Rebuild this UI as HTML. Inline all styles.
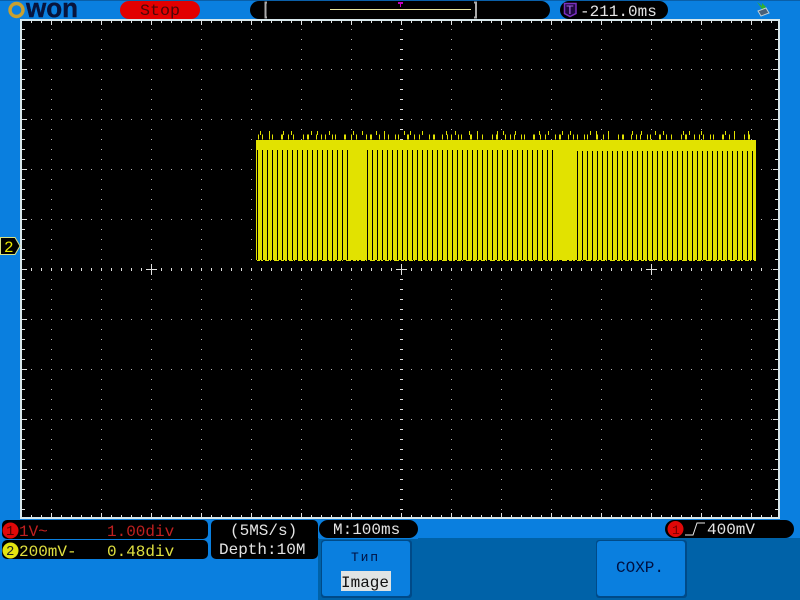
<!DOCTYPE html>
<html>
<head>
<meta charset="utf-8">
<style>
html,body{margin:0;padding:0;width:800px;height:600px;overflow:hidden;background:#0a7fdf}
svg{display:block}
text{font-family:"Liberation Mono",monospace;font-size:16px;white-space:pre}
</style>
</head>
<body>
<svg width="800" height="600" viewBox="0 0 800 600" xmlns="http://www.w3.org/2000/svg">
<defs>
<pattern id="dv" patternUnits="userSpaceOnUse" x="1" y="9" width="50" height="10"><rect width="1" height="1" fill="#b0b0b0"/></pattern>
<pattern id="dh" patternUnits="userSpaceOnUse" x="1" y="19" width="10" height="50"><rect width="1" height="1" fill="#b0b0b0"/></pattern>
<pattern id="b1" patternUnits="userSpaceOnUse" x="257" y="0" width="5" height="10"><rect width="1" height="10" fill="#000"/></pattern>
<pattern id="b2" patternUnits="userSpaceOnUse" x="367" y="0" width="5" height="10"><rect width="1" height="10" fill="#000"/></pattern>
<pattern id="b3" patternUnits="userSpaceOnUse" x="577" y="0" width="5" height="10"><rect width="1" height="10" fill="#000"/></pattern>
</defs>
<rect width="800" height="600" fill="#0a7fdf"/>
<rect width="800" height="1" fill="#0a5fa8"/>

<!-- scope screen -->
<rect x="20" y="19" width="760" height="500" fill="#d8e8ec"/>
<rect x="22" y="21" width="756" height="496" fill="#000"/>
<rect x="22" y="21" width="756" height="496" fill="url(#dv)"/>
<rect x="22" y="21" width="756" height="496" fill="url(#dh)"/>
<g stroke="#e0e0e0" fill="none">
<line x1="31" y1="22" x2="778" y2="22" stroke-width="2" stroke-dasharray="1 9"/>
<line x1="51" y1="23" x2="778" y2="23" stroke-width="4" stroke-dasharray="1 49"/>
<line x1="31" y1="516" x2="778" y2="516" stroke-width="2" stroke-dasharray="1 9"/>
<line x1="51" y1="515" x2="778" y2="515" stroke-width="4" stroke-dasharray="1 49"/>
<line x1="23.5" y1="29" x2="23.5" y2="517" stroke-width="3" stroke-dasharray="1 9"/>
<line x1="24.5" y1="69" x2="24.5" y2="517" stroke-width="5" stroke-dasharray="1 49"/>
<line x1="776.5" y1="29" x2="776.5" y2="517" stroke-width="3" stroke-dasharray="1 9"/>
<line x1="775.5" y1="69" x2="775.5" y2="517" stroke-width="5" stroke-dasharray="1 49"/>
<line x1="31" y1="269.5" x2="770" y2="269.5" stroke-width="3" stroke-dasharray="1 9"/>
<line x1="401.5" y1="29" x2="401.5" y2="510" stroke-width="3" stroke-dasharray="1 9"/>
<path d="M146 269.5H157M151.5 264V275M646 269.5H657M651.5 264V275M396 269.5H407M401.5 264V275" stroke-width="1"/>
</g>

<!-- waveform -->
<g stroke="#e2e200" fill="none">
<line x1="258" y1="137" x2="756" y2="137" stroke-width="5" stroke-dasharray="1 3 1 6 1 2 1 8 2 5 1 4 1 9 1 3 2 7 1 4"/>
<line x1="260" y1="133" x2="756" y2="133" stroke-width="4" stroke-dasharray="1 8 1 13 1 7 1 19 1 5 1 11 1 23"/>
<line x1="257" y1="260.5" x2="756" y2="260.5" stroke-width="1" stroke-dasharray="3 1 2 2 4 1 1 3 5 2"/>
</g>
<rect x="256" y="140" width="500" height="120" fill="#e2e200"/>
<rect x="257" y="150" width="95" height="110" fill="url(#b1)"/>
<rect x="367" y="150" width="190" height="110" fill="url(#b2)"/>
<rect x="577" y="151" width="178" height="109" fill="url(#b3)"/>

<!-- ch2 marker -->
<path d="M0.5 237.5H15L20 246L15 254.5H0.5Z" fill="#000" stroke="#d8e080"/>
<text x="4" y="252" fill="#e8e800">2</text>

<!-- logo -->
<circle cx="16.500" cy="10" r="6.500" fill="none" stroke="#c8a030" stroke-width="3.400"/>
<text x="26" y="17" textLength="52" lengthAdjust="spacingAndGlyphs" style="font-family:'Liberation Sans',sans-serif;font-size:27px;font-weight:bold" fill="#08143c" stroke="#08143c" stroke-width=".4">won</text>

<!-- stop -->
<rect x="120" y="1" width="80" height="18" rx="9" fill="#e20000"/>
<text x="140" y="15" fill="#4a0808" textLength="40" lengthAdjust="spacingAndGlyphs">Stop</text>

<!-- timebase bar -->
<rect x="250" y="1" width="300" height="18" rx="9" fill="#000"/>
<path d="M267 2.500H265.500V17.500H267" fill="none" stroke="#aaa" stroke-width="2"/>
<path d="M474 2.500H476V17.500H474" fill="none" stroke="#aaa" stroke-width="2"/>
<rect x="330" y="9" width="141" height="1" fill="#e8e8a0"/>
<path d="M398 2H403V4H401V7H400V4H398Z" fill="#c000c0"/>

<!-- trigger position -->
<rect x="560" y="1" width="108" height="18" rx="9" fill="#000"/>
<path d="M564.500 3.500H576V13.500L570 16.500L564.500 13.500Z" fill="#200840" stroke="#7a30c0" stroke-width="1.500"/>
<text x="566" y="14" fill="#a060e0" style="font-size:13px">T</text>
<text x="580" y="16" fill="#e4e4e4">-211.0ms</text>

<!-- usb icon -->
<path d="M757 2L762 6V3L766 7L762 11V9Z" fill="#30b030"/>
<path d="M758 11L766 8L769 13L761 16Z" fill="#4a6078" stroke="#c0d0d8" stroke-width="1"/>

<!-- channel info -->
<rect x="2" y="520" width="206" height="19" rx="5" fill="#000"/>
<rect x="2" y="540" width="206" height="19" rx="5" fill="#000"/>
<circle cx="10.500" cy="530.500" r="8" fill="#e00808"/>
<circle cx="10.500" cy="550.500" r="8" fill="#e4e410"/>
<text x="6" y="535" fill="#500" style="font-size:14px">1</text>
<text x="6" y="555" fill="#222" style="font-size:14px">2</text>
<text x="19" y="536" fill="#c02020">1V~</text>
<text x="107" y="536" fill="#c02020">1.00div</text>
<text x="19" y="556" fill="#e0e040">200mV-</text>
<text x="107" y="556" fill="#e0e040">0.48div</text>

<rect x="211" y="520" width="107" height="39" rx="5" fill="#000"/>
<text x="230" y="535" fill="#e4e4e4">(5MS/s)</text>
<text x="219" y="554" fill="#e4e4e4">Depth:10M</text>

<rect x="319" y="520" width="99" height="18" rx="9" fill="#000"/>
<text x="333" y="534" fill="#e4e4e4">M:100ms</text>

<rect x="665" y="520" width="129" height="18" rx="9" fill="#000"/>
<circle cx="675.500" cy="529" r="8" fill="#e00808"/>
<text x="672" y="534" fill="#700" style="font-size:13px">1</text>
<path d="M685 535H693L697 523H705" fill="none" stroke="#e8e8e8" stroke-width="1"/>
<text x="707" y="534" fill="#e4e4e4">400mV</text>

<!-- menu panel -->
<rect x="318" y="538" width="482" height="62" fill="#0062a8"/>
<rect x="319" y="538" width="99" height="1" fill="#0a7fdf"/>

<rect x="321" y="540" width="91" height="58" rx="3" fill="#004a88"/>
<rect x="322" y="541" width="88" height="55" rx="3" fill="#0a7fdf"/>
<rect x="341" y="571" width="50" height="20" fill="#e0e4e4"/>
<text x="351" y="561" fill="#001040" textLength="27" lengthAdjust="spacing" style="font-size:13px">Тип</text>
<text x="341" y="587" fill="#101010">Image</text>

<rect x="596" y="540" width="91" height="58" rx="3" fill="#004a88"/>
<rect x="597" y="541" width="88" height="55" rx="3" fill="#0a7fdf"/>
<text x="616" y="572" fill="#001040">СОХР.</text>
</svg>
</body>
</html>
